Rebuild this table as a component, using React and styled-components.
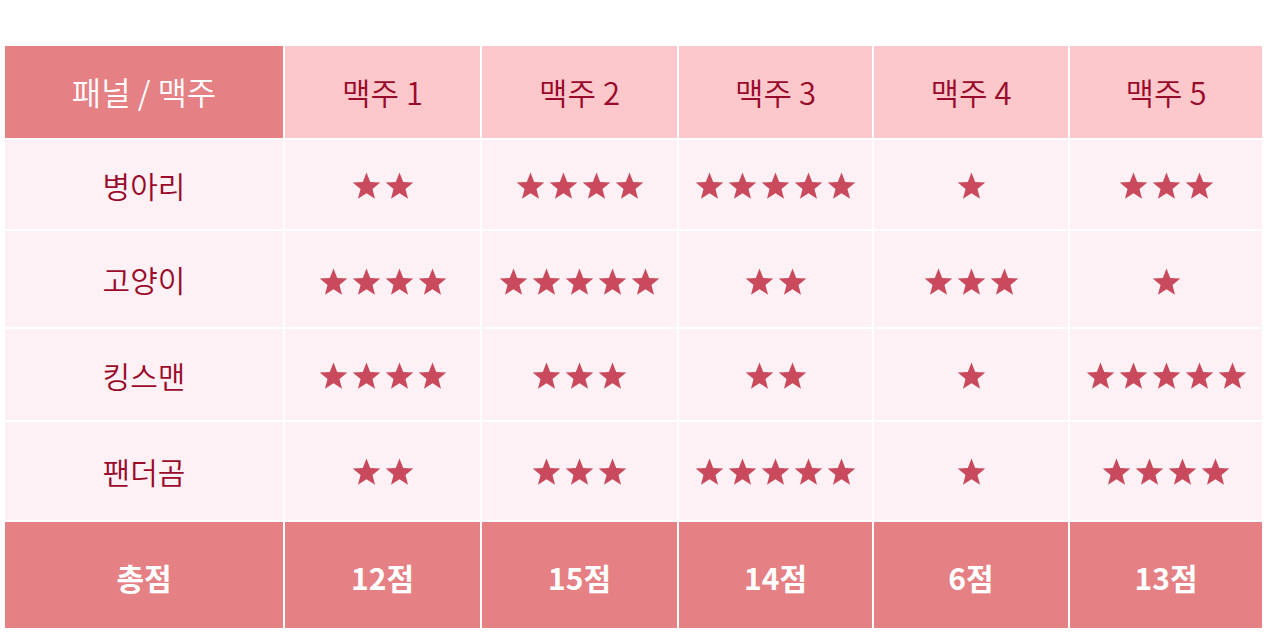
import React from 'react'
import styled, { createGlobalStyle } from 'styled-components'

const beers = ['맥주 1', '맥주 2', '맥주 3', '맥주 4', '맥주 5']

const panels = [
    { name: '병아리', scores: [2, 4, 5, 1, 3] },
    { name: '고양이', scores: [4, 5, 2, 3, 1] },
    { name: '킹스맨', scores: [4, 3, 2, 1, 5] },
    { name: '팬더곰', scores: [2, 3, 5, 1, 4] },
]

const totals = beers.map((_, i) => panels.reduce((sum, p) => sum + p.scores[i], 0))

const Star = () => (
    <svg width="29" height="28" viewBox="0 0 30 29">
        <polygon
            fill="#c84a5c"
            points="15,0.5 18.82,10.24 29.27,10.86 21.18,17.51 23.82,27.64 15,22 6.18,27.64 8.82,17.51 0.73,10.86 11.18,10.24"
        />
    </svg>
)

const Stars = ({ count }) => (
    <StarRow>
        {Array.from({ length: count }).map((_, i) => <Star key={i} />)}
    </StarRow>
)

const App = () => {
    return (
        <Page>
            <GlobalStyle />
            <Table>
                <HeadCell $corner>패널 / 맥주</HeadCell>
                {beers.map(b => <HeadCell key={b}>{b}</HeadCell>)}

                {panels.map((p, r) => (
                    <React.Fragment key={p.name}>
                        <NameCell>{p.name}</NameCell>
                        {p.scores.map((s, i) => (
                            <Cell key={i} $row={r}><Stars count={s} /></Cell>
                        ))}
                    </React.Fragment>
                ))}

                <TotalCell>총점</TotalCell>
                {totals.map((t, i) => <TotalCell key={i}>{t}점</TotalCell>)}
            </Table>
        </Page>
    )
}

const GlobalStyle = createGlobalStyle`
    body {
        margin: 0;
        background: #ffffff;
        font-family: "Noto Sans CJK KR", "Noto Sans", sans-serif;
    }
`
const Page = styled.div`
    padding: 46px 10px 0 5px;
`
const Table = styled.div`
    display: grid;
    grid-template-columns: 278px 195px 195px 193px 194px 1fr;
    grid-template-rows: 92px 89px 96px 91px 98px 106px;
    gap: 2px;
`
const HeadCell = styled.div`
    display: flex;
    align-items: center;
    justify-content: center;
    background: ${p => p.$corner ? '#e58185' : '#fdc8cb'};
    color: ${p => p.$corner ? '#ffffff' : '#990a2b'};
    font-size: ${p => p.$corner ? '32px' : '31px'};
    font-weight: 350;
    padding-bottom: 2px;
`
const NameCell = styled.div`
    display: flex;
    align-items: center;
    justify-content: center;
    background: #fdf1f5;
    color: #990a2b;
    font-size: 30px;
    font-weight: 350;
`
const Cell = styled.div`
    display: flex;
    align-items: center;
    justify-content: center;
    background: #fdf1f5;
    padding-top: ${p => p.$row === 1 ? '6px' : '2px'};
`
const StarRow = styled.div`
    display: flex;
    gap: 4px;
`
const TotalCell = styled.div`
    display: flex;
    align-items: center;
    justify-content: center;
    background: #e58185;
    color: #ffffff;
    font-size: 30px;
    font-weight: 700;
    padding-top: 4px;
`

export default App
